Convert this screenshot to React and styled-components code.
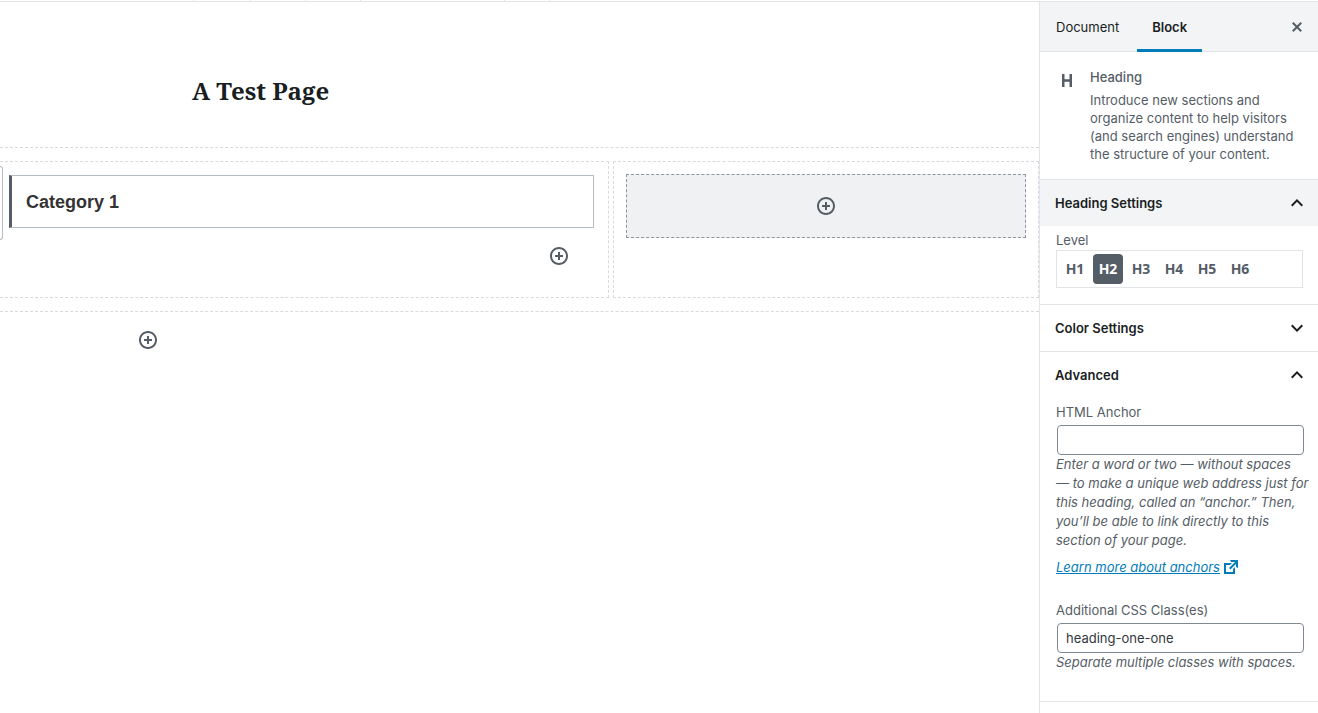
// NPM
import React, { useState } from 'react';
import styled, { createGlobalStyle, css } from 'styled-components';

// STYLES
const GlobalStyle = createGlobalStyle`
  *, *::before, *::after {
    box-sizing: border-box;
  }

  body {
    margin: 0;
    background: #fff;
    color: #191e23;
    font-family: Inter, 'Liberation Sans', sans-serif;
    font-size: 13px;
    line-height: 18px;
  }

  button, input {
    font: inherit;
    color: inherit;
  }

  h1, h2, h3, p {
    margin: 0;
  }

  svg {
    display: block;
    fill: currentColor;
  }
`;

const Page = styled.div`
  display: flex;
  flex-direction: column;
  min-height: 100vh;
`;

const TopBar = styled.header`
  display: flex;
  height: 2px;
  border-bottom: 1px solid #e2e4e7;
`;

const TopBarGroup = styled.span`
  width: ${props => props.$width}px;
  border-right: 1px solid #e2e4e7;
`;

const Body = styled.div`
  display: flex;
  flex: 1;
`;

const Canvas = styled.main`
  flex: 1;
  min-width: 0;
`;

const Title = styled.h1`
  padding: 71px 0 39px 192px;
  font-family: 'Noto Serif', 'DejaVu Serif Condensed', 'DejaVu Serif', serif;
  font-size: 24px;
  font-weight: 700;
  line-height: 35px;
`;

const Columns = styled.section`
  display: grid;
  grid-template-columns: 609fr 426fr;
  gap: 4px;
  padding: 13px 0;
  border: 1px dashed #d8dae0;
  border-width: 1px 0;
`;

const Column = styled.div`
  min-height: 137px;
  border: 1px dashed #d8dae0;

  ${props =>
    props.$bleed
      ? css`
          border-left: 0;
          padding: 4px 14px 0 0;
        `
      : css`
          padding: 12px;
        `}
`;

const SelectedRow = styled.div`
  display: flex;
  align-items: flex-start;
  gap: 6px;
`;

const Mover = styled.div`
  width: 3px;
  height: 74px;
  border: 1px solid #b5bcc2;
  border-left: 0;
  border-radius: 0 4px 4px 0;
`;

const HeadingBlock = styled.div`
  flex: 1;
  margin-top: 9px;
  padding: 15px 14px 13px;
  border: 1px solid #b5bcc2;
  border-left: 3px solid #555d66;
`;

const BlockHeading = styled.h2`
  font-family: 'Liberation Sans', Arial, sans-serif;
  font-size: 18px;
  font-weight: 700;
  line-height: 23px;
  color: #333;
`;

const IconButton = styled.button`
  display: block;
  padding: 0;
  border: 0;
  background: none;
  color: #555d66;
  cursor: pointer;
`;

const ColumnAppender = styled.div`
  display: flex;
  justify-content: flex-end;
  padding: 6px 25px 0 0;
`;

const Placeholder = styled.div`
  display: flex;
  align-items: center;
  justify-content: center;
  height: 64px;
  border: 1px dashed #8d96a0;
  background: #f0f1f3;
`;

const PageAppender = styled.div`
  padding: 18px 138px;
`;

const Sidebar = styled.aside`
  flex: none;
  width: 279px;
  border-left: 1px solid #e2e4e7;
`;

const Tabs = styled.div`
  display: flex;
  align-items: stretch;
  height: 50px;
  padding-right: 11px;
  border-bottom: 1px solid #e2e4e7;
  background: #f3f4f5;
`;

const Tab = styled.button`
  height: 50px;
  padding: 0 15px;
  border: 0;
  background: none;
  color: #191e23;
  cursor: pointer;

  &:first-child {
    padding: 0 18px 0 16px;
  }

  ${props =>
    props.$active &&
    css`
      box-shadow: inset 0 -3px #007cba;
      font-weight: 600;
    `}
`;

const CloseButton = styled(IconButton)`
  margin-left: auto;
`;

const Card = styled.section`
  display: flex;
  gap: 13px;
  padding: 16px 16px 16px 17px;
  color: #555d66;

  svg {
    flex: none;
    margin-top: 2px;
  }
`;

const CardTitle = styled.h2`
  margin-bottom: 5px;
  font-size: 13px;
  font-weight: 500;
`;

const PanelWrap = styled.section`
  border-top: 1px solid #e2e4e7;
`;

const PanelToggle = styled.button`
  display: flex;
  align-items: center;
  justify-content: space-between;
  width: 100%;
  height: 46px;
  padding: 0 9px 0 15px;
  border: 0;
  background: ${props => (props.$shaded ? '#f3f4f5' : 'none')};
  font-weight: 600;
  text-align: left;
  cursor: pointer;
`;

const PanelBody = styled.div`
  padding: 5px 15px ${props => (props.$tight ? '16px' : '29px')} 16px;
  color: #555d66;
`;

const LevelLabel = styled.p`
  margin-bottom: 1px;
`;

const Levels = styled.div`
  display: flex;
  gap: 3px;
  padding: 3px;
  border: 1px solid #e2e4e7;
`;

const LevelButton = styled.button`
  width: 30px;
  height: 30px;
  padding: 0;
  border: 0;
  border-radius: 4px;
  background: ${props => (props.$active ? '#555d66' : 'none')};
  color: ${props => (props.$active ? '#fff' : '#555d66')};
  font-family: 'Noto Sans', sans-serif;
  font-size: 14px;
  font-weight: 700;
  cursor: pointer;
`;

const Field = styled.div`
  & + & {
    margin-top: 24px;
  }

  label {
    display: block;
    margin-bottom: 4px;
  }
`;

const TextInput = styled.input`
  display: block;
  width: 100%;
  height: 30px;
  margin: 0 1px;
  padding: 0 8px;
  border: 1px solid #7e8993;
  border-radius: 4px;
  background: #fff;
  color: #32373c;
`;

const Help = styled.div`
  margin-right: -8px;
  font-style: italic;
  line-height: 19px;
`;

const HelpLink = styled.a`
  display: flex;
  align-items: center;
  gap: 1px;
  margin-top: 7px;
  color: #007cba;
  text-decoration: none;

  span {
    text-decoration: underline;
  }
`;

const Footer = styled.div`
  border-top: 1px solid #e2e4e7;
`;

// ICONS
const InsertIcon = () => (
  <svg width="20" height="20" viewBox="0 0 20 20" aria-hidden="true">
    <path d="M10 1c-5 0-9 4-9 9s4 9 9 9 9-4 9-9-4-9-9-9zm0 16c-3.9 0-7-3.1-7-7s3.1-7 7-7 7 3.1 7 7-3.1 7-7 7zm1-11H9v3H6v2h3v3h2v-3h3V9h-3V6z" />
  </svg>
);

const CloseIcon = () => (
  <svg width="20" height="20" viewBox="0 0 20 20" aria-hidden="true">
    <path d="M14.95 6.46L11.41 10l3.54 3.54-1.41 1.41L10 11.42l-3.53 3.53-1.42-1.42L8.58 10 5.05 6.47l1.42-1.42L10 8.58l3.54-3.53z" />
  </svg>
);

const HeadingIcon = () => (
  <svg width="20" height="20" viewBox="0 0 20 20" aria-hidden="true">
    <path d="M12.5 4v5.2h-5V4H5v13h2.5v-5.2h5V17H15V4z" />
  </svg>
);

const ExternalIcon = () => (
  <svg width="20" height="20" viewBox="0 0 20 20" aria-hidden="true">
    <path d="M9 3h8v8l-2-1V6.92l-5.6 5.59-1.41-1.41L14.08 5H10zm3 12v-3l2-2v7H3V6h8L9 8H5v7h7z" />
  </svg>
);

const Chevron = ({ up }) => (
  <svg width="24" height="24" viewBox="0 0 24 24" aria-hidden="true">
    <path
      d={
        up
          ? 'M12 8l-6 6 1.41 1.41L12 10.83l4.59 4.58L18 14z'
          : 'M7.41 8.59L12 13.17l4.59-4.58L18 10l-6 6-6-6z'
      }
    />
  </svg>
);

// COMPONENTS
const Appender = () => (
  <IconButton type="button" aria-label="Add block">
    <InsertIcon />
  </IconButton>
);

function Panel({ title, shaded, tight, initialOpen, children }) {
  const [open, setOpen] = useState(Boolean(initialOpen));
  return (
    <PanelWrap>
      <PanelToggle type="button" $shaded={shaded} aria-expanded={open} onClick={() => setOpen(!open)}>
        {title}
        <Chevron up={open} />
      </PanelToggle>
      {open && children && <PanelBody $tight={tight}>{children}</PanelBody>}
    </PanelWrap>
  );
}

const TOOLBAR_GROUPS = [194, 57, 55, 55, 144, 45];
const LEVELS = [1, 2, 3, 4, 5, 6];

// MODULE
export default function App() {
  const [tab, setTab] = useState('Block');
  const [level, setLevel] = useState(2);
  const [anchor, setAnchor] = useState('');
  const [classes, setClasses] = useState('heading-one-one');

  return (
    <Page>
      <GlobalStyle />
      <TopBar>
        {TOOLBAR_GROUPS.map((width, i) => (
          <TopBarGroup key={i} $width={width} />
        ))}
      </TopBar>
      <Body>
        <Canvas>
          <Title>A Test Page</Title>
          <Columns>
            <Column $bleed>
              <SelectedRow>
                <Mover />
                <HeadingBlock>
                  <BlockHeading>Category 1</BlockHeading>
                </HeadingBlock>
              </SelectedRow>
              <ColumnAppender>
                <Appender />
              </ColumnAppender>
            </Column>
            <Column>
              <Placeholder>
                <Appender />
              </Placeholder>
            </Column>
          </Columns>
          <PageAppender>
            <Appender />
          </PageAppender>
        </Canvas>
        <Sidebar>
          <Tabs>
            {['Document', 'Block'].map(name => (
              <Tab key={name} type="button" $active={tab === name} onClick={() => setTab(name)}>
                {name}
              </Tab>
            ))}
            <CloseButton type="button" aria-label="Close settings">
              <CloseIcon />
            </CloseButton>
          </Tabs>
          <Card>
            <HeadingIcon />
            <div>
              <CardTitle>Heading</CardTitle>
              <p>
                Introduce new sections and organize content to help visitors (and search engines)
                understand the structure of your content.
              </p>
            </div>
          </Card>
          <Panel title="Heading Settings" shaded tight initialOpen>
            <LevelLabel id="level-label">Level</LevelLabel>
            <Levels role="group" aria-labelledby="level-label">
              {LEVELS.map(n => (
                <LevelButton
                  key={n}
                  type="button"
                  $active={level === n}
                  aria-pressed={level === n}
                  onClick={() => setLevel(n)}
                >
                  H{n}
                </LevelButton>
              ))}
            </Levels>
          </Panel>
          <Panel title="Color Settings" />
          <Panel title="Advanced" initialOpen>
            <Field>
              <label htmlFor="html-anchor">HTML Anchor</label>
              <TextInput
                id="html-anchor"
                type="text"
                value={anchor}
                onChange={e => setAnchor(e.target.value)}
              />
              <Help>
                <p>
                  Enter a word or two — without spaces
                  <br />
                  — to make a unique web address just for this heading, called an “anchor.” Then,
                  you’ll be able to link directly to this section of your page.
                </p>
                <HelpLink href="#anchors">
                  <span>Learn more about anchors</span>
                  <ExternalIcon />
                </HelpLink>
              </Help>
            </Field>
            <Field>
              <label htmlFor="css-classes">Additional CSS Class(es)</label>
              <TextInput
                id="css-classes"
                type="text"
                value={classes}
                onChange={e => setClasses(e.target.value)}
              />
              <Help>Separate multiple classes with spaces.</Help>
            </Field>
          </Panel>
          <Footer />
        </Sidebar>
      </Body>
    </Page>
  );
}
